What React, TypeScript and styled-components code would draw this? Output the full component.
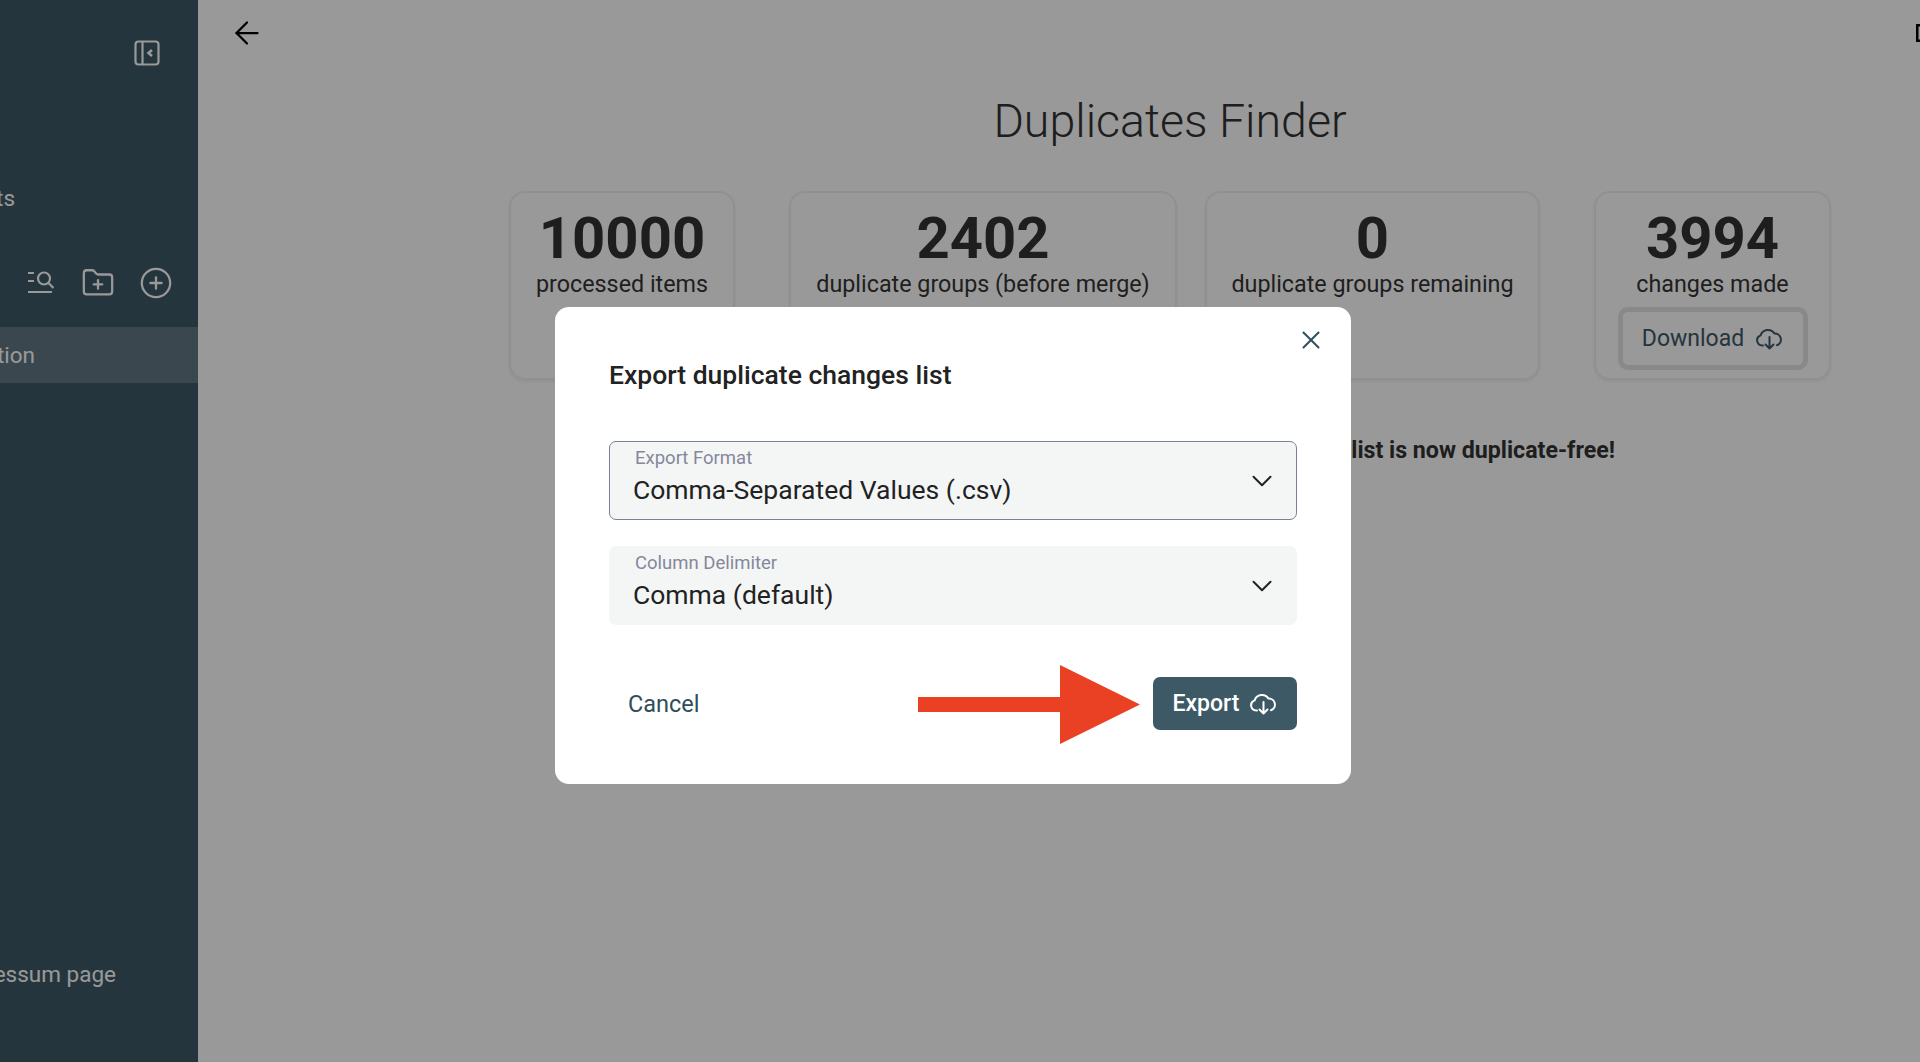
import styled, { createGlobalStyle } from 'styled-components'
import { ArrowLeft, ChevronDown, CirclePlus, FolderPlus, X } from 'lucide-react'

const GlobalStyle = createGlobalStyle`
  html, body {
    margin: 0;
    height: 100%;
    overflow: hidden;
    background: #fff;
    font-family: Roboto, "Liberation Sans", sans-serif;
  }
`

const Page = styled.div`
  display: flex;
  width: 2142px;
  height: 1062px;
  overflow: hidden;
`

const Sidebar = styled.aside`
  display: flex;
  flex-direction: column;
  flex-shrink: 0;
  width: 198px;
  height: 100%;
  overflow: hidden;
  background: #3e5966;
  color: #fff;
`

const ToggleRow = styled.div`
  display: flex;
  justify-content: flex-end;
  padding: 40px 38px 0 0;
  height: 65px;
  box-sizing: border-box;
`

const NavLabel = styled.div<{ $end: number; $top?: number }>`
  display: flex;
  justify-content: flex-end;
  width: ${({ $end }) => $end}px;
  margin-top: ${({ $top }) => $top || 0}px;
  font-size: 22.5px;
  line-height: 28px;
  white-space: nowrap;
`

const ToolRow = styled.div`
  display: flex;
  align-items: center;
  height: 36px;
  margin-top: 53px;
  padding-left: 13px;
`

const ToolSlot = styled.div<{ $width: number }>`
  display: flex;
  justify-content: center;
  width: ${({ $width }) => $width}px;
`

const ActiveRow = styled.div`
  display: flex;
  align-items: center;
  height: 56px;
  margin-top: 26px;
  background: #627783;
`

const SidebarFooter = styled.div`
  margin-top: auto;
  padding-bottom: 74px;
`

const Main = styled.main`
  display: flex;
  flex-direction: column;
  flex: 1;
  background: #fff;
`

const Header = styled.header`
  display: flex;
  justify-content: space-between;
  align-items: center;
  height: 66px;
  padding: 0 206px 0 31px;
`

const Title = styled.h1`
  margin: 25px 0 0;
  font-size: 46.5px;
  line-height: 60px;
  font-weight: 300;
  color: #333;
  text-align: center;
`

const StatsRow = styled.div<{ $gap: number }>`
  display: flex;
  justify-content: center;
  gap: ${({ $gap }) => $gap}px;
`

const StatsWrap = styled.div`
  margin-top: 40px;
`

const StatCard = styled.div<{ $width: number }>`
  display: flex;
  flex-direction: column;
  align-items: center;
  box-sizing: border-box;
  width: ${({ $width }) => $width}px;
  height: 189px;
  padding-top: 17px;
  border: 2px solid #f1f1f1;
  border-radius: 16px;
  box-shadow: 0 2px 3px rgba(0, 0, 0, 0.06);
`

const StatValue = styled.div`
  font-size: 58px;
  line-height: 56px;
  font-weight: 700;
  color: #333;
`

const StatLabel = styled.div`
  margin-top: 3px;
  font-size: 23.3px;
  line-height: 30px;
  color: #353535;
`

const DownloadButton = styled.button`
  display: flex;
  align-items: center;
  justify-content: center;
  gap: 12px;
  box-sizing: border-box;
  width: 190px;
  height: 63px;
  margin-top: 8px;
  padding: 0;
  border: 5px solid #e4e4e4;
  border-radius: 10px;
  background: transparent;
  color: #3e5966;
  font: 400 23px Roboto, sans-serif;
`

const Message = styled.p`
  margin: 56px 527px 0 0;
  font-size: 23.2px;
  line-height: 28px;
  font-weight: 700;
  color: #333;
  text-align: right;
`

const Overlay = styled.div`
  position: fixed;
  inset: 0;
  display: flex;
  align-items: flex-start;
  padding: 307px 0 0 555px;
  background: rgba(0, 0, 0, 0.4);
`

const Modal = styled.div`
  position: relative;
  box-sizing: border-box;
  width: 796px;
  height: 477px;
  padding: 52px 54px 53px 54px;
  background: #fff;
  border-radius: 14px;
`

const CloseButton = styled.button`
  position: absolute;
  top: 18px;
  right: 25px;
  display: flex;
  padding: 0;
  border: 0;
  background: none;
  color: #2f4e5b;
`

const ModalTitle = styled.h2`
  margin: 0 0 50px;
  font-size: 26.5px;
  line-height: 32px;
  font-weight: 500;
  color: #222;
`

const Select = styled.div<{ $focused?: boolean }>`
  display: flex;
  align-items: center;
  justify-content: space-between;
  box-sizing: border-box;
  height: 79px;
  margin-bottom: 26px;
  padding: 0 17px 0 23px;
  background: #f4f6f6;
  border: 1px solid ${({ $focused }) => ($focused ? '#7c8093' : 'transparent')};
  border-radius: 7px;
  color: #222;
`

const SelectText = styled.div`
  display: flex;
  flex-direction: column;
  margin-bottom: 8px;
`

const SelectLabel = styled.span`
  padding-left: 2px;
  font-size: 18.5px;
  line-height: 22px;
  color: #85889a;
`

const SelectValue = styled.span`
  margin-top: 5px;
  font-size: 26.5px;
  line-height: 32px;
  color: #222;
`

const ModalFooter = styled.div`
  display: flex;
  align-items: center;
  margin-top: 38px;
`

const CancelButton = styled.button`
  padding: 0 19px;
  border: 0;
  background: none;
  font: 400 23.5px Roboto, sans-serif;
  color: #2f4e5b;
`

const ArrowMark = styled.svg`
  margin: 2px 13px 0 auto;
`

const ExportButton = styled.button`
  display: flex;
  align-items: center;
  justify-content: center;
  gap: 11px;
  box-sizing: border-box;
  width: 144px;
  height: 53px;
  padding: 0;
  border: 0;
  border-radius: 7px;
  background: #3e5966;
  color: #fff;
  font: 500 23px Roboto, sans-serif;
`

const SidebarToggleIcon = () => (
  <svg width='26' height='26' viewBox='0 0 26 26' fill='none' stroke='currentColor' strokeWidth='2.2'>
    <rect x='1.5' y='1.5' width='23' height='23' rx='3' />
    <path d='M8.5 1.5v23' />
    <path d='M18 10l-3.5 3 3.5 3' strokeWidth='2.6' />
  </svg>
)

const SearchListIcon = () => (
  <svg width='26' height='24' viewBox='0 0 26 24' fill='none' stroke='currentColor' strokeWidth='2.2'>
    <path d='M0 2h6M0 10h6M0 21h24' />
    <circle cx='16' cy='7.5' r='6' />
    <path d='M20.5 12l5 5' />
  </svg>
)

const TopRightIcon = () => (
  <svg width='20' height='18' viewBox='0 0 20 18' fill='none' stroke='#000' strokeWidth='2.5'>
    <rect x='1.25' y='1.25' width='17' height='15.5' />
  </svg>
)

const CloudArrowIcon = () => (
  <svg width='27' height='23' viewBox='0 0 27 23' fill='none' stroke='currentColor' strokeWidth='2' strokeLinecap='round' strokeLinejoin='round'>
    <path d='M7 18.5H6.2A5.2 5.2 0 0 1 4.6 8.4A7.6 7.6 0 0 1 18.4 6.6A6 6 0 0 1 21 18.2' />
    <path d='M13.5 10V21.5M9.5 17.5l4 4 4-4' />
  </svg>
)

const App = () => (
  <>
    <GlobalStyle />
    <Page>
      <Sidebar>
        <ToggleRow>
          <SidebarToggleIcon />
        </ToggleRow>
        <NavLabel $end={15} $top={119}>Projects</NavLabel>
        <ToolRow>
          <ToolSlot $width={56}><SearchListIcon /></ToolSlot>
          <ToolSlot $width={58}><FolderPlus size={34} strokeWidth={1.6} /></ToolSlot>
          <ToolSlot $width={58}><CirclePlus size={34} strokeWidth={1.6} /></ToolSlot>
        </ToolRow>
        <ActiveRow>
          <NavLabel $end={35}>Deduplication</NavLabel>
        </ActiveRow>
        <SidebarFooter>
          <NavLabel $end={116}>Impressum page</NavLabel>
        </SidebarFooter>
      </Sidebar>
      <Main>
        <Header>
          <ArrowLeft size={36} strokeWidth={1.5} color='#000' />
          <TopRightIcon />
        </Header>
        <Title>Duplicates Finder</Title>
        <StatsWrap>
          <StatsRow $gap={54}>
            <StatCard $width={226}>
              <StatValue>10000</StatValue>
              <StatLabel>processed items</StatLabel>
            </StatCard>
            <StatsRow $gap={28}>
              <StatCard $width={388}>
                <StatValue>2402</StatValue>
                <StatLabel>duplicate groups (before merge)</StatLabel>
              </StatCard>
              <StatCard $width={335}>
                <StatValue>0</StatValue>
                <StatLabel>duplicate groups remaining</StatLabel>
              </StatCard>
            </StatsRow>
            <StatCard $width={237}>
              <StatValue>3994</StatValue>
              <StatLabel>changes made</StatLabel>
              <DownloadButton>
                Download
                <CloudArrowIcon />
              </DownloadButton>
            </StatCard>
          </StatsRow>
        </StatsWrap>
        <Message>Your list is now duplicate-free!</Message>
      </Main>
    </Page>
    <Overlay>
      <Modal>
        <CloseButton>
          <X size={30} strokeWidth={1.6} />
        </CloseButton>
        <ModalTitle>Export duplicate changes list</ModalTitle>
        <Select $focused>
          <SelectText>
            <SelectLabel>Export Format</SelectLabel>
            <SelectValue>Comma-Separated Values (.csv)</SelectValue>
          </SelectText>
          <ChevronDown size={34} strokeWidth={1.4} />
        </Select>
        <Select>
          <SelectText>
            <SelectLabel>Column Delimiter</SelectLabel>
            <SelectValue>Comma (default)</SelectValue>
          </SelectText>
          <ChevronDown size={34} strokeWidth={1.4} />
        </Select>
        <ModalFooter>
          <CancelButton>Cancel</CancelButton>
          <ArrowMark width='222' height='79' viewBox='0 0 222 79'>
            <polygon points='0,32 142,32 142,0 222,39.5 142,79 142,47 0,47' fill='#ea4124' />
          </ArrowMark>
          <ExportButton>
            Export
            <CloudArrowIcon />
          </ExportButton>
        </ModalFooter>
      </Modal>
    </Overlay>
  </>
)

export default App
